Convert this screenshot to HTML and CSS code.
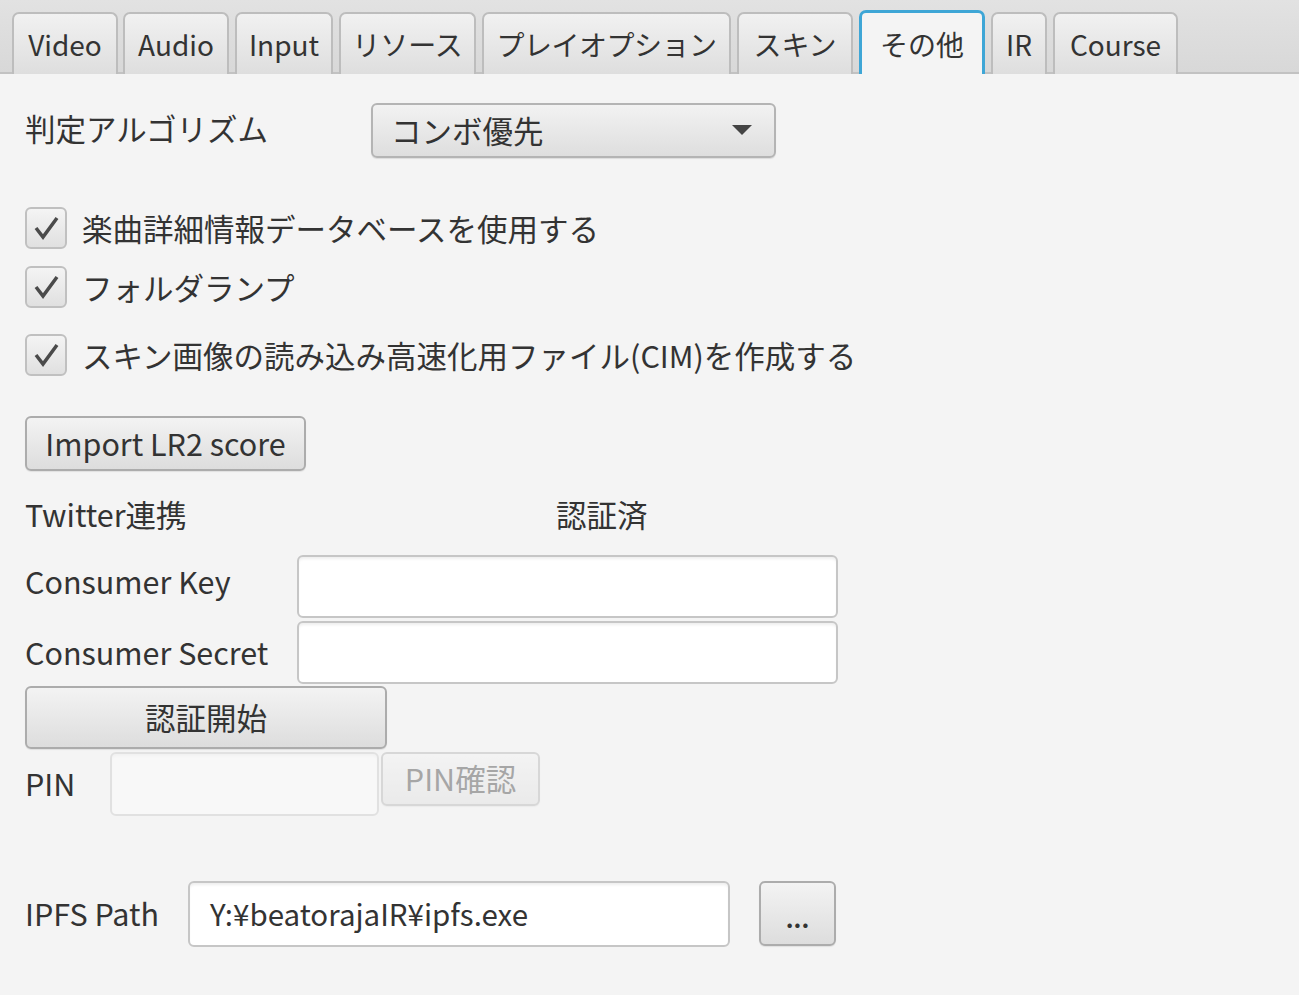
FILE: index.html
```html
<!DOCTYPE html>
<html lang="ja">
<head>
<meta charset="utf-8">
<title>Config</title>
<link rel="stylesheet" href="styles.css">
</head>
<body>
<div class="tabbar">
  <div class="tab t-video">Video</div>
  <div class="tab t-audio">Audio</div>
  <div class="tab t-input">Input</div>
  <div class="tab t-res">リソース</div>
  <div class="tab t-play">プレイオプション</div>
  <div class="tab t-skin">スキン</div>
  <div class="tab t-other selected">その他</div>
  <div class="tab t-ir">IR</div>
  <div class="tab t-course">Course</div>
</div>
<div class="content">
  <div class="row algo">
    <span class="label algo-label">判定アルゴリズム</span>
    <div class="combo">
      <span>コンボ優先</span>
      <svg class="arrow" width="20" height="11" viewBox="0 0 20 11"><polygon points="0,0 20,0 10,10" fill="#444"/></svg>
    </div>
  </div>

  <div class="checks">
    <label class="check c1"><span class="box"><svg width="30" height="28" viewBox="0 0 30 28"><path d="M5 14 L12 23 L26 4" fill="none" stroke="#4a4a4a" stroke-width="3.5"/></svg></span>楽曲詳細情報データベースを使用する</label>
    <label class="check c2"><span class="box"><svg width="30" height="28" viewBox="0 0 30 28"><path d="M5 14 L12 23 L26 4" fill="none" stroke="#4a4a4a" stroke-width="3.5"/></svg></span>フォルダランプ</label>
    <label class="check c3"><span class="box"><svg width="30" height="28" viewBox="0 0 30 28"><path d="M5 14 L12 23 L26 4" fill="none" stroke="#4a4a4a" stroke-width="3.5"/></svg></span>スキン画像の読み込み高速化用ファイル(CIM)を作成する</label>
  </div>

  <button class="btn import">Import LR2 score</button>

  <div class="row twitter">
    <span class="label tw-label">Twitter連携</span>
    <span class="label">認証済</span>
  </div>

  <div class="row keyrow">
    <span class="label key-label first">Consumer Key</span>
    <div class="field wide"></div>
  </div>
  <div class="row keyrow secret">
    <span class="label key-label">Consumer Secret</span>
    <div class="field wide"></div>
  </div>

  <button class="btn auth">認証開始</button>

  <div class="row pinrow">
    <span class="label pin-label">PIN</span>
    <div class="field pin disabled"></div>
    <button class="btn pinbtn disabled">PIN確認</button>
  </div>

  <div class="row ipfs">
    <span class="label ipfs-label">IPFS Path</span>
    <div class="field path">Y:¥beatorajaIR¥ipfs.exe</div>
    <button class="btn dots">...</button>
  </div>
</div>
</body>
</html>
```

FILE: styles.css
```css
html, body {
  margin: 0;
  padding: 0;
  background: #f4f4f4;
  width: 1299px;
  height: 995px;
  overflow: hidden;
}
body {
  font-family: "Noto Sans CJK JP", "Noto Sans", sans-serif;
  font-size: 30.5px;
  color: #333;
}
.tabbar {
  height: 74px;
  box-sizing: border-box;
  display: flex;
  align-items: flex-end;
  padding-left: 12px;
  background: linear-gradient(#e2e2e2, #d8d8d8);
  border-bottom: 2px solid #c2c2c2;
}
.tab {
  height: 62px;
  box-sizing: border-box;
  margin-bottom: -2px;
  margin-right: 6px;
  padding: 0;
  display: flex;
  align-items: center;
  justify-content: center;
  border: 2px solid #bdbdbd;
  border-bottom: none;
  border-radius: 7px 7px 0 0;
  background: linear-gradient(#f1f1f1, #dedede);
  color: #333;
  font-size: 28px;
  line-height: 1;
  white-space: nowrap;
}
.t-video { width: 106px; margin-right: 5px; }
.t-audio { width: 106px; }
.t-input { width: 98px; }
.t-res { width: 137px; }
.t-play { width: 249px; letter-spacing: -0.5px; }
.t-skin { width: 116px; }
.t-other { width: 126px; }
.t-ir { width: 56px; }
.t-course { width: 125px; }
.tab.selected {
  border-color: #3ea6d6;
  border-width: 3px;
  border-bottom: none;
  background: #f4f4f4;
  height: 64px;
  padding-top: 1px;
}
.content {
  padding-left: 25px;
  display: flex;
  flex-direction: column;
  align-items: flex-start;
}
.row {
  display: flex;
  align-items: center;
}
.label {
  line-height: 1;
  white-space: nowrap;
}
.algo {
  margin-top: 29px;
}
.algo-label {
  width: 346px;
  margin-top: -4px;
}
.combo {
  width: 405px;
  height: 55px;
  box-sizing: border-box;
  border: 2px solid #b4b4b4;
  border-radius: 6px;
  background: linear-gradient(#f2f2f2, #dedede);
  display: flex;
  align-items: center;
  justify-content: space-between;
  padding: 0 22px 0 18px;
  box-shadow: 0 1px 1px rgba(0,0,0,0.1);
}
.combo span {
  line-height: 1;
}
.checks {
  margin-top: 49px;
  display: flex;
  flex-direction: column;
}
.check {
  display: flex;
  align-items: center;
  gap: 15px;
  line-height: 1;
}
.c2 { margin-top: 17px; }
.c3 { margin-top: 26px; }
.box {
  width: 42px;
  height: 42px;
  box-sizing: border-box;
  border: 2px solid #c0c0c0;
  border-radius: 6px;
  background: linear-gradient(#f4f4f4, #e0e0e0);
  display: flex;
  align-items: center;
  justify-content: center;
}
.btn {
  font: inherit;
  color: #333;
  line-height: 1;
  box-sizing: border-box;
  border: 2px solid #acacac;
  border-radius: 6px;
  background: linear-gradient(#f3f3f3, #dddddd);
  box-shadow: 0 1px 1px rgba(0,0,0,0.08);
  padding: 0;
  display: flex;
  align-items: center;
  justify-content: center;
}
.import {
  margin-top: 40px;
  width: 281px;
  height: 55px;
}
.twitter {
  margin-top: 28px;
}
.tw-label {
  width: 531px;
}
.keyrow {
  margin-top: 25px;
}
.keyrow.secret {
  margin-top: 3px;
}
.key-label {
  width: 272px;
}
.key-label.first {
  margin-top: -10px;
}
.field {
  box-sizing: border-box;
  border: 2px solid #c6c6c6;
  border-radius: 6px;
  background: #fff;
  box-shadow: inset 0 3px 3px -1px rgba(0,0,0,0.07);
  display: flex;
  align-items: center;
  line-height: 1;
}
.wide {
  width: 541px;
  height: 63px;
}
.auth {
  margin-top: 2px;
  width: 362px;
  height: 63px;
}
.pinrow {
  margin-top: 3px;
  align-items: flex-start;
}
.pin-label {
  width: 85px;
  margin-top: 16px;
}
.pin {
  width: 269px;
  height: 64px;
}
.pinbtn {
  margin-left: 2px;
  width: 159px;
  height: 54px;
}
.disabled {
  opacity: 0.4;
}
.ipfs {
  margin-top: 65px;
}
.ipfs-label {
  width: 163px;
}
.path {
  width: 542px;
  height: 66px;
  padding-left: 20px;
  font-size: 29.5px;
}
.dots {
  margin-left: 29px;
  width: 77px;
  height: 65px;
  font-size: 24px;
  font-weight: bold;
  padding-top: 8px;
}
```
